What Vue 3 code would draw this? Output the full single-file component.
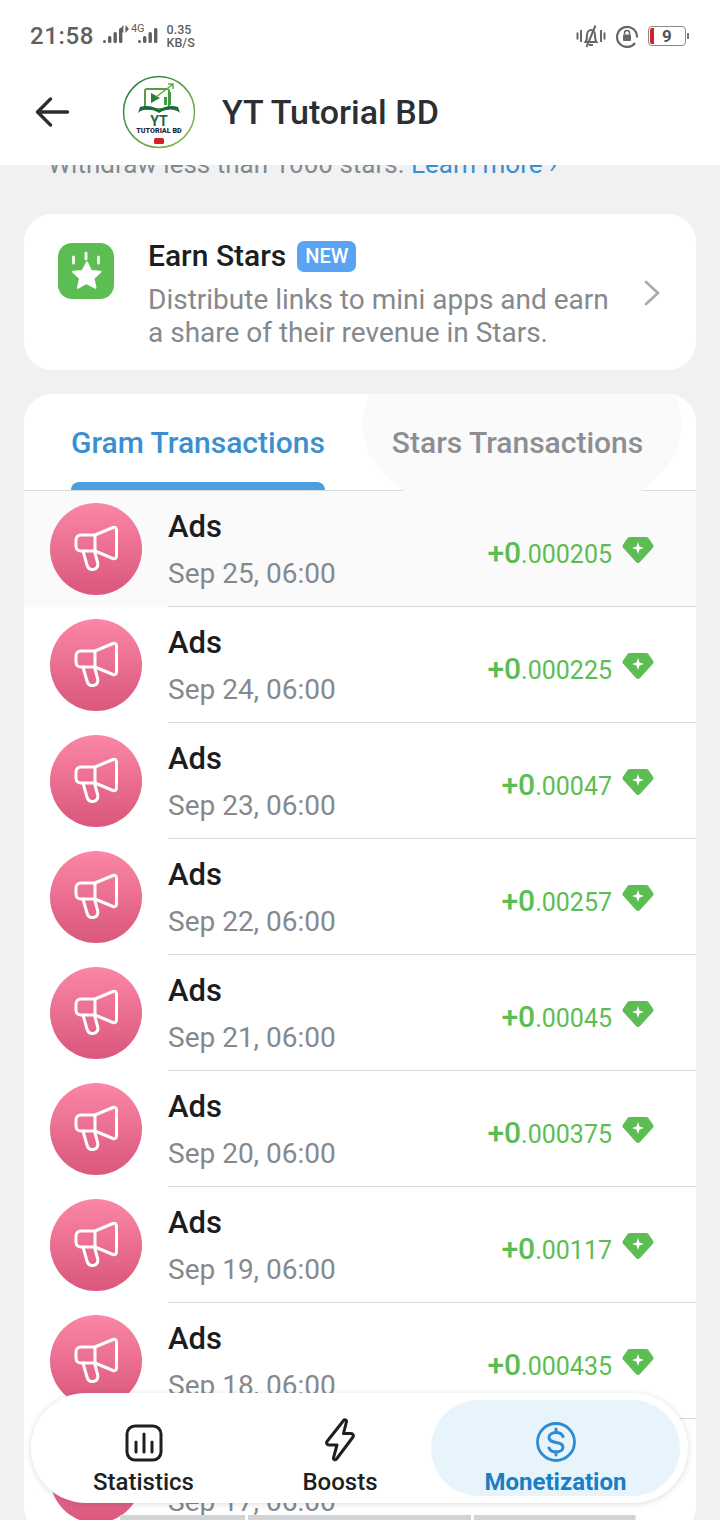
<template>
  <div class="page">
    <header class="top">
      <div class="status">
        <div class="status-left">
          <span class="clock">21:58</span>
          <svg class="signal" width="24" height="22" viewBox="0 0 24 22"><rect x="0" y="15" width="3" height="3" rx="1.5"/><rect x="5" y="11" width="3.4" height="7" rx="1.5"/><rect x="10.5" y="7" width="3.4" height="11" rx="1.5"/><rect x="16" y="3" width="3.4" height="15" rx="1.5"/></svg>
          <div class="net">
            <svg width="9" height="8" viewBox="0 0 9 8"><path d="M3.4 0v8L0 4zM5.4 0v8L9 4z"/></svg>
            <span class="four-g">4G</span>
          </div>
          <svg class="signal second" width="24" height="22" viewBox="0 0 24 22"><rect x="0" y="15" width="3" height="3" rx="1.5"/><rect x="5" y="11" width="3.4" height="7" rx="1.5"/><rect x="10.5" y="7" width="3.4" height="11" rx="1.5"/><rect x="16" y="3" width="3.4" height="15" rx="1.5"/></svg>
          <div class="speed"><span>0.35</span><span>KB/S</span></div>
        </div>
        <div class="status-right">
          <svg width="30" height="24" viewBox="0 0 30 24" fill="none" stroke="#666" stroke-width="2"><path d="M1.5 8.5v7M5 6v12M25 6v12M28.500 8.500v7"/><path d="M9.500 18c1.500-2 1.500-4 1.500-7 0-3 2-5 4-5s4 2 4 5c0 3 0 5 1.500 7zM13 21h4"/><path d="M19.500 1.500L10.500 23"/></svg>
          <svg width="24" height="24" viewBox="0 0 24 24" fill="none" stroke="#666" stroke-width="2.200"><path d="M20 19a10 10 0 1 1 2-7v1.500"/><rect x="8" y="10.500" width="8" height="6.500" rx="1" fill="#666" stroke="none"/><path d="M9.500 10.500V9a2.500 2.500 0 0 1 5 0v1.500" stroke-width="1.500"/></svg>
          <div class="battery">
            <i class="battery-low"></i>
            <span>9</span>
            <i class="battery-tip"></i>
          </div>
        </div>
      </div>
      <div class="title-bar">
        <svg class="back" width="36" height="32" viewBox="0 0 36 32" fill="none" stroke="#2b2f33" stroke-width="3.400" stroke-linecap="round" stroke-linejoin="round"><path d="M2.500 16h30M15.500 3L2.500 16l13 13"/></svg>
        <svg class="logo" width="74" height="74" viewBox="0 0 74 74">
          <defs>
            <linearGradient id="ring" x1="0" y1="0" x2="1" y2="1"><stop offset="0" stop-color="#1f7a3f"/><stop offset="1" stop-color="#8fc04a"/></linearGradient>
          </defs>
          <circle cx="37" cy="37" r="35.500" fill="#fff" stroke="url(#ring)" stroke-width="1.500"/>
          <rect x="23" y="14" width="24" height="20" rx="2" fill="none" stroke="#5c9a45" stroke-width="2"/>
          <path d="M29 18l9 5-9 5z" fill="#2d7a45"/>
          <path d="M39 30l3 0 0-8 3 0 0 8zM46 30v-13h3v13z" fill="#3f9a45"/>
          <path d="M34 22L50 10M46 9h5v5" fill="none" stroke="#5fa845" stroke-width="1.500"/>
          <path d="M16 38c6-5 15-4 21 0 6-4 15-5 21 0l-2-6c-6-2-14-1-19 3-5-4-13-5-19-3z" fill="#1d6a3e"/>
          <text x="37" y="51" class="logo-yt">YT</text>
          <text x="37" y="58" class="logo-name">TUTORIAL BD</text>
          <rect x="32" y="63" width="10" height="6" rx="1.500" fill="#d3202a"/>
        </svg>
        <h1>YT Tutorial BD</h1>
      </div>
    </header>

    <main class="scroll">
      <p class="hint">Withdraw less than 1000 stars. <a>Learn more ›</a></p>

      <section class="card earn">
        <div class="earn-icon">
          <svg width="56" height="56" viewBox="0 0 56 56">
            <rect width="56" height="56" rx="14" fill="#5bbd52"/>
            <path d="M15.500 14v6M28 10v6M40.500 14v6" stroke="#fff" stroke-width="3" stroke-linecap="round" opacity=".9"/>
            <path d="M29 19.500l4 8.500 9.500 .8-7 6.500 2 9.500-9-4.800-8.500 4.800 2-9.500-7-6.500 9.500-.8z" fill="#fff" stroke="#fff" stroke-width="2" stroke-linejoin="round"/>
          </svg>
        </div>
        <div class="earn-text">
          <div class="earn-title">Earn Stars <span class="new">NEW</span></div>
          <div class="earn-desc">Distribute links to mini apps and earn<br>a share of their revenue in Stars.</div>
        </div>
        <svg class="chev" width="18" height="28" viewBox="0 0 18 28" fill="none" stroke="#a6abb0" stroke-width="2.600" stroke-linecap="round" stroke-linejoin="round"><path d="M3 3l12 11L3 25"/></svg>
      </section>

      <section class="card list">
        <div class="tabs">
          <div class="tab active">Gram Transactions<i></i></div>
          <div class="tab">Stars Transactions</div>
        </div>
        <div v-for="(row, i) in rows" :key="row.date" class="row" :class="{ pressed: i === 0 }">
          <div class="avatar">
            <svg width="46" height="50" viewBox="0 0 46 50" fill="none" stroke="#fff" stroke-width="3" stroke-linejoin="round" stroke-linecap="round">
              <path d="M40 3.500c2-.8 3.500.5 3.500 2.500v26c0 2-1.500 3.200-3.500 2.500L22 27H8c-3 0-5-2-5-5v-6c0-3 2-5 5-5h14z"/>
              <path d="M22 11v16"/>
              <path d="M10 27l4 14c1 3.500 3.500 5 6.500 4.500 3.500-.6 5-3.500 4.200-6.500l-2.700-10"/>
            </svg>
          </div>
          <div class="row-main">
            <div class="row-text">
              <div class="row-title">Ads</div>
              <div class="row-date">{{ row.date }}</div>
            </div>
            <div class="amount">
              <span class="amount-val">+0<small>{{ row.frac }}</small></span>
              <svg width="32" height="28" viewBox="0 0 32 28">
                <path d="M8 1h16c1 0 1.800.4 2.400 1.100l4.500 6.400c.8 1.100.7 2.500-.2 3.500L18 26c-1.100 1.300-3 1.300-4 0L1.300 12c-.9-1-1-2.400-.2-3.500l4.500-6.400C6.200 1.400 7 1 8 1z" fill="#5bbd52"/>
                <path d="M16 6l1.500 4.500L22 12l-4.500 1.500L16 18l-1.500-4.500L10 12l4.500-1.500z" fill="#fff"/>
              </svg>
            </div>
          </div>
        </div>
        <div class="skeleton"><i></i><i></i><i></i></div>
      </section>
    </main>

    <nav class="bottom">
      <div class="nav-item">
        <svg width="38" height="38" viewBox="0 0 38 38" fill="none" stroke="#1c1f23" stroke-width="3" stroke-linecap="round"><rect x="2" y="2" width="34" height="34" rx="8"/><path d="M11 18v10M19 10v18M27 18v10"/></svg>
        <span>Statistics</span>
      </div>
      <div class="nav-item">
        <svg width="30" height="44" viewBox="0 0 30 44" fill="none" stroke="#1c1f23" stroke-width="3" stroke-linejoin="round"><path d="M19 2c1.500-.6 2.800.6 2.400 2L18.500 15.500h7.500c2 0 3 2 2 3.500L11.500 41c-1.200 1.500-3.400.6-3-1.200L12 27H4c-2 0-3-2-2-3.500z"/></svg>
        <span>Boosts</span>
      </div>
      <div class="nav-item on">
        <svg width="40" height="40" viewBox="0 0 40 40" fill="none" stroke="#2f8bd0" stroke-width="2.800" stroke-linecap="round"><circle cx="20" cy="20" r="18.500"/><path d="M27 14.500c-1-2.500-3.500-4-7-4-4 0-7 2-7 5 0 7 14 3 14 9.500 0 3-3 5-7 5-3.500 0-6-1.500-7-4M20 7v3.500M20 29.500V33" stroke-width="3"/></svg>
        <span>Monetization</span>
      </div>
    </nav>
  </div>
</template>

<script setup>
const rows = [
  { date: 'Sep 25, 06:00', frac: '.000205' },
  { date: 'Sep 24, 06:00', frac: '.000225' },
  { date: 'Sep 23, 06:00', frac: '.00047' },
  { date: 'Sep 22, 06:00', frac: '.00257' },
  { date: 'Sep 21, 06:00', frac: '.00045' },
  { date: 'Sep 20, 06:00', frac: '.000375' },
  { date: 'Sep 19, 06:00', frac: '.00117' },
  { date: 'Sep 18, 06:00', frac: '.000435' },
  { date: 'Sep 17, 06:00', frac: '.00052' }
]
</script>

<style>
html, body { margin: 0; background: #f0f1f3; }
</style>

<style scoped>
.page {
  position: relative;
  width: 720px;
  height: 1520px;
  overflow: hidden;
  display: flex;
  flex-direction: column;
  background: #f0f1f3;
  font-family: Roboto, "Liberation Sans", sans-serif;
}

.top {
  flex: none;
  height: 165px;
  background: #fff;
  z-index: 2;
}

.status {
  height: 66px;
  padding: 6px 32px 0 30px;
  box-sizing: border-box;
  display: flex;
  justify-content: space-between;
  align-items: center;
  color: #606060;
}

.status-left {
  display: flex;
  align-items: center;
}

.clock {
  font-size: 24px;
  font-weight: 500;
  letter-spacing: 0.6px;
}

.signal {
  fill: #606060;
  margin-left: 9px;
}

.signal.second {
  margin-left: -7px;
  margin-right: 5px;
}

.net {
  display: flex;
  align-items: center;
  gap: 2px;
  margin: -14px 0 0 -7px;
  height: 14px;
}

.net svg {
  fill: #606060;
}

.four-g {
  font-size: 11px;
  line-height: 14px;
}

.speed {
  display: flex;
  flex-direction: column;
  font-size: 12.500px;
  line-height: 13px;
  font-weight: 500;
}

.status-right {
  display: flex;
  align-items: center;
  gap: 9px;
}

.battery {
  position: relative;
  width: 36px;
  height: 18px;
  border: 1px solid #8a8a8a;
  border-radius: 4px;
  margin-right: 2px;
  display: flex;
  align-items: center;
  justify-content: center;
  font-size: 17px;
  font-weight: 700;
  color: #555;
}

.battery-low {
  position: absolute;
  left: 1px;
  top: 1px;
  bottom: 1px;
  width: 4px;
  background: #d3202a;
  border-radius: 2px 0 0 2px;
}

.battery-tip {
  position: absolute;
  right: -4px;
  top: 6px;
  width: 2px;
  height: 6px;
  background: #777;
}

.title-bar {
  height: 84px;
  display: flex;
  align-items: center;
  margin-top: 4px;
}

.back {
  margin-left: 35px;
}

.logo {
  margin-left: 51px;
}

.logo-yt {
  font-size: 14px;
  font-weight: 700;
  fill: #1d6a3e;
  text-anchor: middle;
}

.logo-name {
  font-size: 7.200px;
  font-weight: 900;
  fill: #1c2c3a;
  text-anchor: middle;
}

h1 {
  margin: 0 0 0 26px;
  font-size: 34px;
  font-weight: 500;
  color: #2b2f33;
}

.scroll {
  flex: none;
  padding: 0 24px;
}

.hint {
  margin: -16px 0 35px 24px;
  height: 30px;
  font-size: 26px;
  line-height: 30px;
  color: #85898e;
  white-space: nowrap;
}

.hint a {
  color: #3b8fd0;
}

.card {
  background: #fff;
  border-radius: 28px;
}

.earn {
  height: 156px;
  display: flex;
  align-items: flex-start;
  position: relative;
  margin-bottom: 24px;
}

.earn-icon {
  margin: 29px 0 0 34px;
  height: 56px;
}

.earn-text {
  margin: 23px 0 0 34px;
}

.earn-title {
  display: flex;
  align-items: center;
  gap: 11px;
  font-size: 30px;
  line-height: 38px;
  font-weight: 500;
  color: #1b1d20;
}

.new {
  background: #5aa2f2;
  color: #fff;
  font-size: 20px;
  line-height: 31px;
  padding: 0 8px;
  border-radius: 7px;
}

.earn-desc {
  margin-top: 8px;
  font-size: 28px;
  line-height: 33px;
  color: #85898e;
}

.chev {
  position: absolute;
  right: 35px;
  top: 65px;
}

.list {
  overflow: hidden;
}

.tabs {
  position: relative;
  height: 96px;
  display: flex;
  border-bottom: 1px solid #d9dadc;
  box-sizing: content-box;
}

.tabs::before {
  content: "";
  position: absolute;
  left: 338px;
  top: -70px;
  width: 320px;
  height: 200px;
  border-radius: 50%;
  background: #fafafb;
}

.tab {
  position: relative;
  margin-left: 47px;
  padding-top: 31px;
  font-size: 30px;
  line-height: 36px;
  font-weight: 500;
  color: #8b8f93;
  white-space: nowrap;
}

.tab.active {
  color: #3b8fd0;
}

.tab + .tab {
  margin-left: 67px;
}

.tab i {
  position: absolute;
  left: 0;
  right: 0;
  bottom: 0;
  height: 8px;
  background: #4a9fe0;
  border-radius: 8px 8px 0 0;
}

.row {
  display: flex;
  height: 116px;
  align-items: flex-start;
}

.row.pressed {
  background: #fafafa;
}

.avatar {
  flex: none;
  width: 92px;
  height: 92px;
  margin: 12px 26px 0 26px;
  border-radius: 50%;
  background: linear-gradient(#fb86a6, #d9577b);
  display: flex;
  align-items: center;
  justify-content: center;
}

.row-main {
  flex: 1;
  height: 116px;
  box-sizing: border-box;
  border-bottom: 1px solid #d9dadc;
  display: flex;
  justify-content: space-between;
  padding-right: 42px;
}

.row-title {
  margin-top: 17px;
  font-size: 31px;
  line-height: 38px;
  font-weight: 500;
  color: #1b1d20;
}

.row-date {
  margin-top: 11px;
  font-size: 28px;
  line-height: 34px;
  color: #85898e;
}

.amount {
  display: flex;
  align-items: flex-start;
  gap: 10px;
  margin-top: 45px;
  color: #5bbd52;
}

.amount-val {
  font-size: 30px;
  line-height: 34px;
  font-weight: 500;
}

.amount-val small {
  font-size: 25px;
  font-weight: 400;
}

.skeleton {
  position: absolute;
  left: 120px;
  top: 1515px;
  display: flex;
  gap: 3px;
}

.skeleton i {
  display: block;
  height: 5px;
  background: #d2d3d5;
}

.skeleton i:nth-child(1) { width: 125px; }
.skeleton i:nth-child(2) { width: 223px; }
.skeleton i:nth-child(3) { width: 162px; border-radius: 0 4px 4px 0; }

.bottom {
  position: absolute;
  left: 31px;
  top: 1393px;
  width: 657px;
  height: 110px;
  box-sizing: border-box;
  padding: 7px;
  background: #fff;
  border-radius: 55px;
  box-shadow: 0 1px 6px rgba(0, 0, 0, 0.14);
  display: flex;
  z-index: 3;
}

.nav-item {
  display: flex;
  flex-direction: column;
  align-items: center;
  justify-content: flex-end;
  height: 96px;
  padding-bottom: 0;
  font-size: 24px;
  font-weight: 500;
  line-height: 28px;
  color: #1c1f23;
  gap: 6px;
}

.nav-item:nth-child(1) { width: 211px; }
.nav-item:nth-child(2) { width: 182px; }

.nav-item.on {
  width: 249px;
  background: #e8f4fc;
  border-radius: 48px;
  color: #1a7dc6;
  font-weight: 700;
}
</style>
